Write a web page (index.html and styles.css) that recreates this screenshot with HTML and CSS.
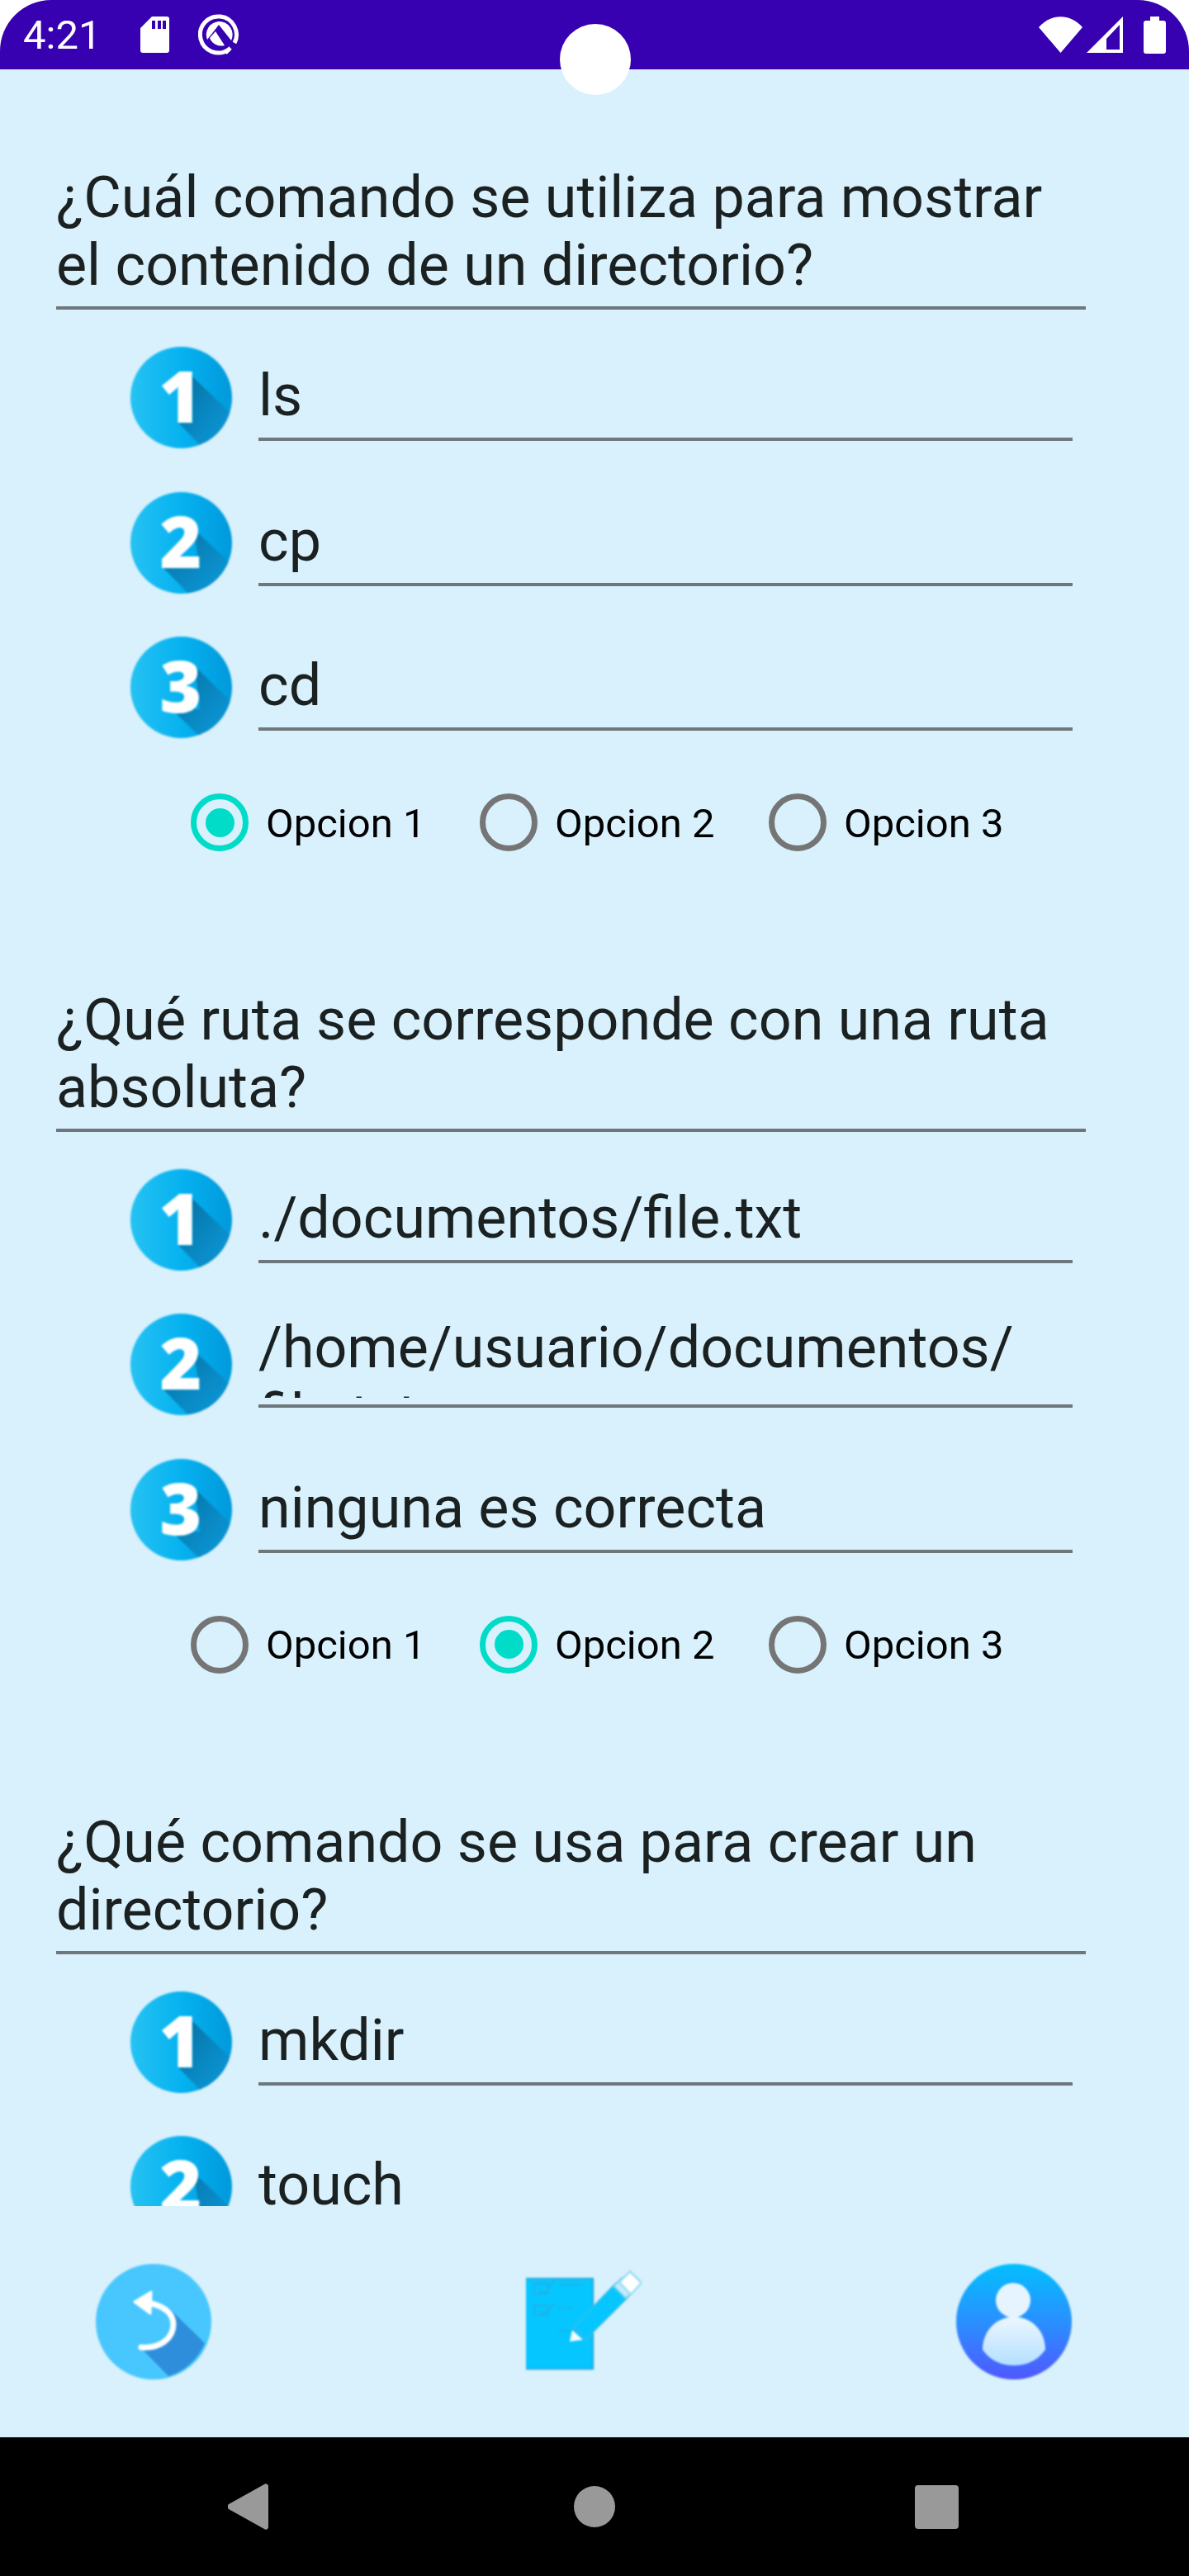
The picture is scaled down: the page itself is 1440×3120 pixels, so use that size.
FILE: index.html
```html
<!DOCTYPE html>
<html lang="es">
<head>
<meta charset="utf-8">
<title>Cuestionario</title>
<link rel="stylesheet" href="styles.css">
</head>
<body>
<svg class="sprite" width="0" height="0" aria-hidden="true">
  <defs>
    <linearGradient id="badgeFill" x1="0" y1="0" x2="1" y2="0">
      <stop offset="0" stop-color="#26c2f3"/><stop offset=".5" stop-color="#06b2f0"/><stop offset="1" stop-color="#0099dc"/>
    </linearGradient>
    <linearGradient id="personFill" x1="0" y1="0" x2="0" y2="1">
      <stop offset="0" stop-color="#03bfff"/><stop offset=".5" stop-color="#2a90ff"/><stop offset="1" stop-color="#5058ff"/>
    </linearGradient>
    <linearGradient id="bodyFill" x1="0" y1="0" x2="0" y2="1">
      <stop offset="0" stop-color="#ecf7ff"/><stop offset="1" stop-color="#b4e0ff"/>
    </linearGradient>
    <linearGradient id="shadowFill" x1="0" y1="0" x2="1" y2="1">
      <stop offset="0" stop-color="#05709f"/><stop offset=".6" stop-color="#0a8cc8"/><stop offset="1" stop-color="#0a9bdc"/>
    </linearGradient>
    <clipPath id="badgeClip"><circle cx="61.5" cy="61.5" r="61.5"/></clipPath>
    <symbol id="badge1" viewBox="0 0 123 123">
      <circle cx="61.5" cy="61.5" r="61.5" fill="url(#badgeFill)"/>
      <path clip-path="url(#badgeClip)" d="M75 36L125 84V125H90L58 92H75Z" fill="url(#shadowFill)"/>
      <text x="60" y="92" class="digit">1</text>
    </symbol>
    <symbol id="badge2" viewBox="0 0 123 123">
      <circle cx="61.5" cy="61.5" r="61.5" fill="url(#badgeFill)"/>
      <path clip-path="url(#badgeClip)" d="M76 44L125 90V125H72L40 92H84Z" fill="url(#shadowFill)"/>
      <text x="61" y="92" class="digit">2</text>
    </symbol>
    <symbol id="badge3" viewBox="0 0 123 123">
      <circle cx="61.5" cy="61.5" r="61.5" fill="url(#badgeFill)"/>
      <path clip-path="url(#badgeClip)" d="M78 36L125 82V125H88L50 88H84Z" fill="url(#shadowFill)"/>
      <text x="61" y="92" class="digit">3</text>
    </symbol>
  </defs>
</svg>

<div class="status">
  <div class="status-left">
    <span class="clock">4:21</span>
    <svg class="st-sd" viewBox="0 0 35 44"><path fill-rule="evenodd" d="M14 0H32a3 3 0 0 1 3 3V41a3 3 0 0 1-3 3H3a3 3 0 0 1-3-3V14ZM14 5V15H18V5ZM21 5V15H25V5ZM27 5V15H31V5Z" fill="#fff"/></svg>
    <svg class="st-q" viewBox="0 0 50 50"><path d="M37 43A22 22 0 1 1 44 35" fill="none" stroke="#fff" stroke-width="5"/><path d="M33 47L39 41" stroke="#fff" stroke-width="5"/><path fill-rule="evenodd" d="M25 9A16 16 0 0 1 40 32L25 13L11 31A16 16 0 0 1 25 9Z" fill="#fff"/><path d="M14 29L21 21L32 38A15 15 0 0 1 14 29Z" fill="#fff"/></svg>
  </div>
  <div class="status-right">
    <svg class="st-wifi" viewBox="0 0 53 44"><path d="M0 13C15 -4 38 -4 53 13L26.500 44Z" fill="#fff"/></svg>
    <svg class="st-signal" viewBox="0 0 44 44"><path fill-rule="evenodd" d="M44 0V44H0ZM40 10L24 27V40H40Z" fill="#fff"/></svg>
    <svg class="st-battery" viewBox="0 0 27 45"><path d="M8 0H19V5H24a3 3 0 0 1 3 3V42a3 3 0 0 1-3 3H3a3 3 0 0 1-3-3V8a3 3 0 0 1 3-3H8Z" fill="#fff"/></svg>
  </div>
</div>
<div class="camera"></div>

<main class="main">
  <div class="scroll">
    <section class="group">
      <h2 class="question">¿Cuál comando se utiliza para mostrar el contenido de un directorio?</h2>
      <div class="answers">
        <div class="answer"><svg class="badge"><use href="#badge1"/></svg><div class="field"><div class="field-text">ls</div></div></div>
        <div class="answer"><svg class="badge"><use href="#badge2"/></svg><div class="field"><div class="field-text">cp</div></div></div>
        <div class="answer"><svg class="badge"><use href="#badge3"/></svg><div class="field"><div class="field-text">cd</div></div></div>
      </div>
      <div class="radios">
        <div class="radio radio-on"><span class="ring"></span><span class="radio-label">Opcion 1</span></div>
        <div class="radio"><span class="ring"></span><span class="radio-label">Opcion 2</span></div>
        <div class="radio"><span class="ring"></span><span class="radio-label">Opcion 3</span></div>
      </div>
    </section>
    <section class="group">
      <h2 class="question">¿Qué ruta se corresponde con una ruta absoluta?</h2>
      <div class="answers">
        <div class="answer"><svg class="badge"><use href="#badge1"/></svg><div class="field"><div class="field-text">./documentos/file.txt</div></div></div>
        <div class="answer"><svg class="badge"><use href="#badge2"/></svg><div class="field"><div class="field-text field-wrapped">/home/usuario/documentos/<wbr>file.txt</div></div></div>
        <div class="answer"><svg class="badge"><use href="#badge3"/></svg><div class="field"><div class="field-text">ninguna es correcta</div></div></div>
      </div>
      <div class="radios">
        <div class="radio"><span class="ring"></span><span class="radio-label">Opcion 1</span></div>
        <div class="radio radio-on"><span class="ring"></span><span class="radio-label">Opcion 2</span></div>
        <div class="radio"><span class="ring"></span><span class="radio-label">Opcion 3</span></div>
      </div>
    </section>
    <section class="group">
      <h2 class="question">¿Qué comando se usa para crear un directorio?</h2>
      <div class="answers">
        <div class="answer"><svg class="badge"><use href="#badge1"/></svg><div class="field"><div class="field-text">mkdir</div></div></div>
        <div class="answer"><svg class="badge"><use href="#badge2"/></svg><div class="field"><div class="field-text">touch</div></div></div>
      </div>
    </section>
  </div>
  <div class="toolbar">
    <svg class="tool" viewBox="0 0 140 140">
      <circle cx="70" cy="70" r="70" fill="#48c7ff"/>
      <path d="M85 50L132 96A70 70 0 0 1 88 136L55 102C80 105 94 90 94 72C94 62 92 56 85 50Z" fill="#2f8edb"/>
      <path d="M62 47C82 50 94 60 94 73C94 90 78 103 55 101" fill="none" stroke="#fff" stroke-width="7" stroke-linecap="round"/>
      <path d="M47 46L67 34L66 60Z" fill="#fff" stroke="#fff" stroke-width="3" stroke-linejoin="round"/>
    </svg>
    <svg class="tool" viewBox="0 0 140 140">
      <rect x="0" y="17" width="81" height="111" fill="#05c6ff"/>
      <path d="M0 18H81M0 127H81M81 17V128" stroke="#2ab0e4" stroke-width="2.500" fill="none"/>
      <path d="M10 24H26V36H10ZM10 50H26V62H10ZM42 25H68M40 53H56M40 81H68M16 31L22 36L34 21M16 57L22 62L34 47" fill="none" stroke="#1fb2e8" stroke-width="2"/>
      <path d="M58 76L108 24L124 40L72 92Z" fill="#05c6ff" stroke="#3bbde9" stroke-width="1.500"/>
      <path d="M56 80L69 92L53 94Z" fill="#f3fbff"/>
      <path d="M106 27L116 17L130 33L121 42Z" fill="#c3ecfb" stroke="#6fcdef" stroke-width="2"/>
      <path d="M113 22L126 9L140 23L127 37Z" fill="#fff" stroke="#9adcf5" stroke-width="2.500"/>
    </svg>
    <svg class="tool" viewBox="0 0 140 140">
      <circle cx="70" cy="70" r="70" fill="url(#personFill)"/>
      <circle cx="69" cy="44" r="21" fill="#e6f4ff"/>
      <path d="M70 64C50 64 32 80 32 104C42 118 56 123 70 123C84 123 98 118 108 104C108 80 90 64 70 64Z" fill="url(#bodyFill)"/>
    </svg>
  </div>
</main>

<nav class="navbar">
  <svg class="nav-back" viewBox="0 0 49 56"><path d="M1 25L44 1a3 3 0 0 1 5 2V53a3 3 0 0 1-5 2L1 31a4 4 0 0 1 0-6Z" fill="#999"/></svg>
  <span class="nav-home"></span>
  <span class="nav-recent"></span>
</nav>
</body>
</html>
```

FILE: styles.css
```css
* { box-sizing: border-box; }
html, body { margin: 0; padding: 0; }
body {
  width: 1440px;
  height: 3120px;
  background: #fff;
  font-family: Roboto, "Liberation Sans", sans-serif;
  overflow: hidden;
  position: relative;
}
.sprite { position: absolute; }
.digit {
  font-family: "Open Sans", Roboto, sans-serif;
  font-weight: 800;
  font-size: 87px;
  fill: #fff;
  text-anchor: middle;
}

.status {
  height: 84px;
  background: #3700b0;
  border-radius: 62px 62px 0 0;
  display: flex;
  justify-content: space-between;
  align-items: center;
  padding: 0 28px 0 28px;
  color: #fff;
}
.status-left { display: flex; align-items: center; }
.clock { font-size: 49px; line-height: 84px; width: 142px; font-weight: 400; padding-top: 2px; }
.st-sd { width: 35px; height: 44px; margin-right: 35px; }
.st-q { width: 50px; height: 50px; }
.status-right { display: flex; align-items: center; }
.st-wifi { width: 53px; height: 44px; margin-right: 5px; }
.st-signal { width: 44px; height: 44px; margin-right: 25px; }
.st-battery { width: 27px; height: 45px; }
.camera {
  position: absolute;
  left: 678px;
  top: 29px;
  width: 86px;
  height: 86px;
  border-radius: 50%;
  background: #fff;
}

.main { height: 2868px; background: #d8f1fc; }
.scroll { height: 2588px; overflow: hidden; }
.group { padding: 114px 125px 48.75px 68px; }
.question {
  margin: 0;
  font-size: 70px;
  line-height: 82px;
  font-weight: 400;
  color: #1b2021;
  padding-bottom: 9px;
  border-bottom: 4px solid #6e777b;
  height: 177px;
  width: 1247px;
}
.answers {
  margin: 45px 0 0 90px;
  display: grid;
  grid-auto-rows: 175.5px;
}
.answer { display: flex; align-items: flex-start; }
.badge { width: 123px; height: 123px; flex: none; filter: blur(.8px); overflow: hidden; }
.field {
  margin-left: 32px;
  width: 986px;
  height: 114px;
  border-bottom: 4px solid #6e777b;
}
.field-text {
  height: 102px;
  overflow: hidden;
  padding-top: 18px;
  font-size: 70px;
  line-height: 82px;
  color: #1b2021;
}
.field-wrapped { padding-top: 0; }

.radios {
  margin: 14.5px 0 0 163px;
  display: grid;
  grid-template-columns: repeat(3, 350px);
}
.radio { display: flex; align-items: center; height: 70px; }
.ring {
  width: 70px;
  height: 70px;
  border-radius: 50%;
  border: 7px solid #757575;
  flex: none;
  margin-right: 21px;
  position: relative;
}
.radio-on .ring { border-color: #00dcc8; }
.radio-on .ring::after {
  content: "";
  position: absolute;
  left: 10.500px;
  top: 10.500px;
  width: 35px;
  height: 35px;
  border-radius: 50%;
  background: #00dcc8;
}
.radio-label { font-size: 49px; line-height: 58px; color: #000; padding-top: 3px; }

.toolbar {
  height: 280px;
  padding: 70px 142px 0 116px;
  display: flex;
  justify-content: space-between;
  align-items: flex-start;
}
.tool { width: 140px; height: 140px; filter: blur(.8px); overflow: hidden; }

.navbar {
  height: 168px;
  background: #000;
  display: flex;
  align-items: center;
  padding: 0 279px 0 276px;
  justify-content: space-between;
}
.nav-back { width: 49px; height: 56px; }
.nav-home { width: 50px; height: 50px; border-radius: 50%; background: #999; margin-left: 7px; }
.nav-recent { width: 53px; height: 53px; border-radius: 4px; background: #999; }
```
